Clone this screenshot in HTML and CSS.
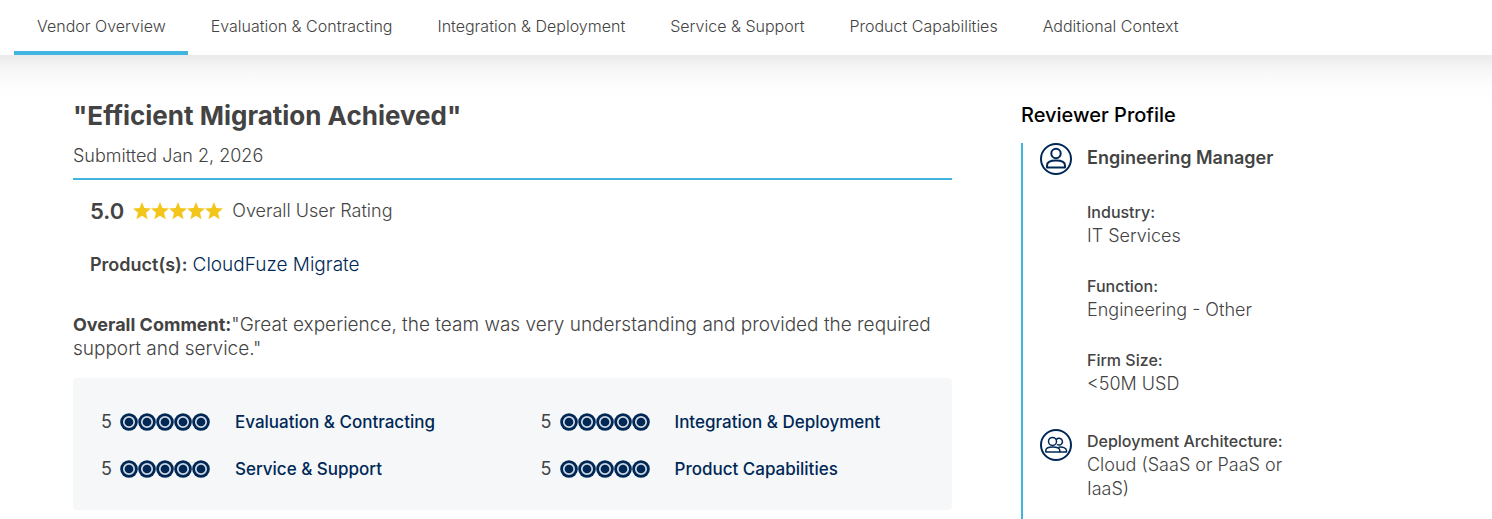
FILE: index.html
```
<!DOCTYPE html>
<html lang="en">
<head>
    <meta charset="UTF-8">
    <meta name="viewport" content="width=device-width, initial-scale=1.0">
    <title>CloudFuze Migrate Review</title>
    <link rel="stylesheet" href="styles.css">
</head>
<body>
    <!-- Shared icons -->
    <svg class="icon-defs" aria-hidden="true">
        <symbol id="star" viewBox="0 0 18 18">
            <path d="M9 0 L11.4 6 L18 6.5 L13 10.8 L14.6 17.2 L9 13.8 L3.4 17.2 L5 10.8 L0 6.5 L6.6 6 Z" fill="#f3c61c"/>
        </symbol>
        <symbol id="dot" viewBox="0 0 18 18">
            <circle cx="9" cy="9" r="8.8" fill="#002856"/>
            <circle cx="9" cy="9" r="5.2" fill="none" stroke="#d3dae3" stroke-width="1.7"/>
        </symbol>
        <symbol id="dots" viewBox="0 0 90 18">
            <use href="#dot" x="0" width="18" height="18"/>
            <use href="#dot" x="18" width="18" height="18"/>
            <use href="#dot" x="36" width="18" height="18"/>
            <use href="#dot" x="54" width="18" height="18"/>
            <use href="#dot" x="72" width="18" height="18"/>
        </symbol>
    </svg>

    <nav class="tabs">
        <a href="#overview" class="tab active">Vendor Overview</a>
        <a href="#evaluation" class="tab">Evaluation &amp; Contracting</a>
        <a href="#integration" class="tab">Integration &amp; Deployment</a>
        <a href="#service" class="tab">Service &amp; Support</a>
        <a href="#product" class="tab">Product Capabilities</a>
        <a href="#context" class="tab">Additional Context</a>
    </nav>

    <div class="page">
        <main class="review" id="overview">
            <h1>"Efficient Migration Achieved"</h1>
            <p class="submitted">Submitted Jan 2, 2026</p>

            <div class="overall">
                <span class="score">5.0</span>
                <svg class="stars" viewBox="0 0 90 18" role="img" aria-label="5 out of 5 stars">
                    <use href="#star" x="0" width="18" height="18"/>
                    <use href="#star" x="18" width="18" height="18"/>
                    <use href="#star" x="36" width="18" height="18"/>
                    <use href="#star" x="54" width="18" height="18"/>
                    <use href="#star" x="72" width="18" height="18"/>
                </svg>
                <span class="rating-label">Overall User Rating</span>
            </div>

            <p class="products"><strong>Product(s):</strong> <a href="#product">CloudFuze Migrate</a></p>

            <p class="comment"><strong>Overall Comment:</strong><span>"Great experience, the team was very understanding and provided the required support and service."</span></p>

            <div class="ratings">
                <div class="rating">
                    <span class="value">5</span>
                    <svg class="dots"><use href="#dots"/></svg>
                    <a href="#evaluation">Evaluation &amp; Contracting</a>
                </div>
                <div class="rating">
                    <span class="value">5</span>
                    <svg class="dots"><use href="#dots"/></svg>
                    <a href="#integration">Integration &amp; Deployment</a>
                </div>
                <div class="rating">
                    <span class="value">5</span>
                    <svg class="dots"><use href="#dots"/></svg>
                    <a href="#service">Service &amp; Support</a>
                </div>
                <div class="rating">
                    <span class="value">5</span>
                    <svg class="dots"><use href="#dots"/></svg>
                    <a href="#product">Product Capabilities</a>
                </div>
            </div>
        </main>

        <aside class="profile">
            <h2>Reviewer Profile</h2>
            <div class="profile-body">
                <div class="profile-row">
                    <svg class="profile-icon" viewBox="0 0 32 32" aria-hidden="true">
                        <circle cx="16" cy="16" r="15"/>
                        <circle cx="16" cy="10.5" r="4.7"/>
                        <path d="M7 24.5 V22.5 C7 19 11 17.6 16 17.6 S25 19 25 22.5 V24.5 Z"/>
                    </svg>
                    <h3>Engineering Manager</h3>
                </div>
                <dl class="details">
                    <dt>Industry:</dt>
                    <dd>IT Services</dd>
                    <dt>Function:</dt>
                    <dd>Engineering - Other</dd>
                    <dt>Firm Size:</dt>
                    <dd>&lt;50M USD</dd>
                </dl>
                <div class="profile-row">
                    <svg class="profile-icon thin" viewBox="0 0 32 32" aria-hidden="true">
                        <circle cx="16" cy="16" r="15" class="ring"/>
                        <circle cx="12.5" cy="12.4" r="4"/>
                        <path d="M5.8 22.9 V21.6 C5.8 19 9 18 12.7 18 S19.8 19 19.8 21.6 V22.9 Z"/>
                        <path d="M16.2 10.8 A3.4 3.4 0 1 1 17 15.4"/>
                        <path d="M18.5 18.3 C22.5 17.6 26.5 18.8 26.5 21.6 V22.9 H19.8"/>
                    </svg>
                    <dl class="details">
                        <dt>Deployment Architecture:</dt>
                        <dd>Cloud (SaaS or PaaS or IaaS)</dd>
                    </dl>
                </div>
            </div>
        </aside>
    </div>
</body>
</html>
```
FILE: styles.css
```
:root {
    --navy: #002856;
    --blue: #42b4e0;
    --text: #434343;
    --panel: #f5f7f9;
}

* {
    margin: 0;
    padding: 0;
    box-sizing: border-box;
}

body {
    min-height: 100vh;
    display: flex;
    flex-direction: column;
    background: white;
    color: var(--text);
    font-family: 'Inter', 'Liberation Sans', sans-serif;
    font-size: 18px;
    font-weight: 300;
    line-height: 24px;
}

a {
    color: var(--navy);
    text-decoration: none;
}

.icon-defs {
    position: absolute;
    width: 0;
    height: 0;
}

/* Tabs */
.tabs {
    display: flex;
    padding: 0 14px;
}

.tab {
    padding: 14px 22px 13px 23px;
    border-bottom: 4px solid transparent;
    color: var(--text);
    font-size: 16px;
    white-space: nowrap;
}

.tab.active {
    border-bottom-color: var(--blue);
}

.page {
    flex: 1;
    display: flex;
    gap: 69px;
    padding: 46px 180px 0 73px;
    background: linear-gradient(#eaeaea, #f6f6f6 14px, #fdfdfd 30px, white 50px);
}

/* Review */
.review {
    flex: 1;
    min-width: 0;
}

.review h1 {
    font-size: 26px;
    font-weight: 700;
    line-height: 30px;
}

.submitted {
    padding: 13px 0 10px;
    border-bottom: 2px solid var(--blue);
}

.overall {
    display: flex;
    align-items: center;
    gap: 9px;
    margin: 19px 0 0 17px;
}

.score {
    font-size: 22px;
    font-weight: 600;
}

.stars {
    width: 90px;
    height: 18px;
}

.products {
    margin: 30px 0 0 17px;
}

.products a,
.comment {
    font-size: 19px;
}

.products strong,
.comment strong {
    font-size: 18px;
    font-weight: 600;
}

.comment strong {
    font-weight: 700;
}

.comment {
    margin: 36px 0 17px;
}

.ratings {
    display: grid;
    grid-template-columns: 1fr 1fr;
    row-gap: 23px;
    padding: 32px 0 29px;
    background: var(--panel);
    border-radius: 4px;
}

.rating {
    display: flex;
    align-items: center;
    padding-left: 28px;
}

.value {
    width: 19px;
    font-weight: 400;
}

.dots {
    width: 90px;
    height: 18px;
    margin-right: 25px;
}

.rating a {
    font-size: 17px;
    font-weight: 500;
}

/* Reviewer profile */
.profile {
    width: 291px;
    display: flex;
    flex-direction: column;
}

.profile h2 {
    margin-bottom: 14px;
    color: black;
    font-size: 20px;
    font-weight: 500;
    line-height: 28px;
}

.profile-body {
    flex: 1;
    padding-left: 17px;
    border-left: 2px solid var(--blue);
}

.profile-row {
    display: flex;
    gap: 15px;
}

.profile-row h3 {
    padding-top: 3px;
    font-size: 18px;
    font-weight: 600;
}

.profile-icon {
    flex: none;
    width: 32px;
    height: 32px;
    fill: none;
    stroke: var(--navy);
    stroke-width: 2;
    stroke-linejoin: round;
}

.profile-icon.thin {
    stroke-width: 1.5;
}

.profile-icon .ring {
    stroke-width: 2;
}

.profile-body > .details {
    margin: 25px 0 33px 47px;
}

.details dt {
    font-size: 16px;
    font-weight: 500;
}

.details dd + dt {
    margin-top: 26px;
}
```
